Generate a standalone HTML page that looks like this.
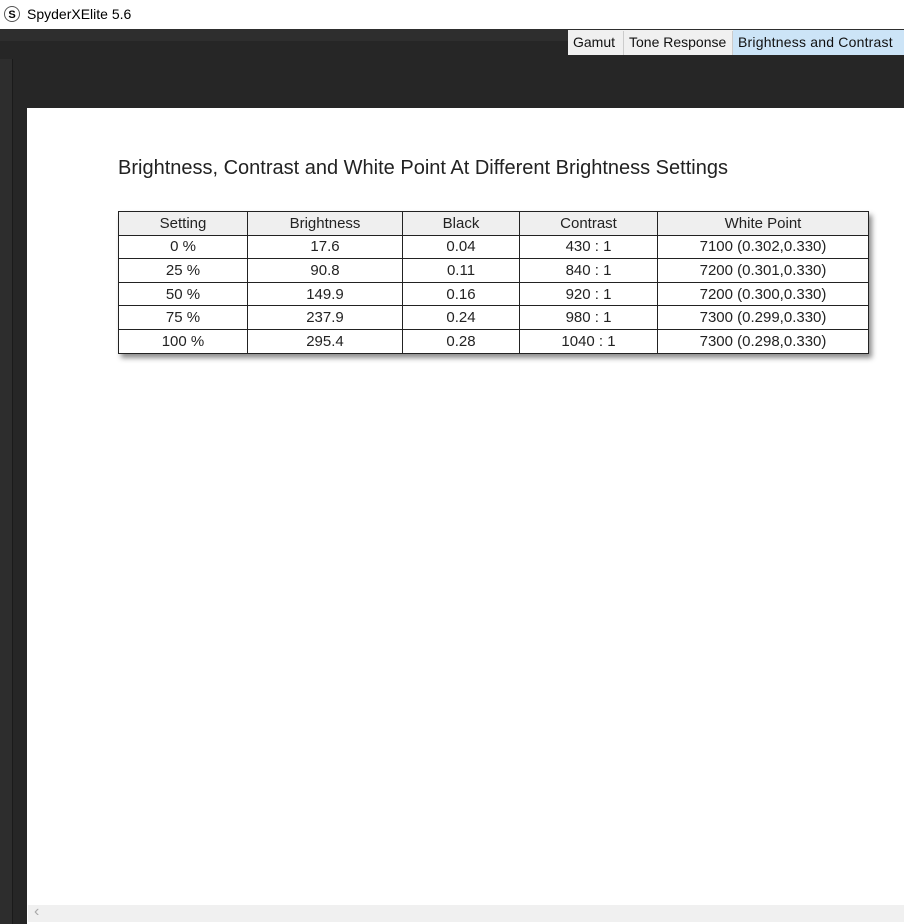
<!DOCTYPE html>
<html><head><style>
body{margin:0;width:904px;height:924px;overflow:hidden;background:#fff;font-family:"Liberation Sans",sans-serif;position:relative}
.a{position:absolute}
table{border-collapse:collapse;position:absolute;left:118px;top:211px;box-shadow:3px 4px 5px rgba(0,0,0,.45)}
td{border:1.5px solid #222;height:22.6px;padding:0;text-align:center;font-size:15px;color:#222}
tr:first-child td{background:#efefef}
</style></head><body>
<div class="a" style="left:4px;top:6px;width:16px;height:16px;border:1px solid #555;border-radius:50%;font:bold 11px 'Liberation Sans';text-align:center;line-height:16px;box-sizing:border-box">S</div>
<div class="a" style="left:27px;top:6px;font-size:14px;color:#000">SpyderXElite 5.6</div>
<div class="a" style="left:0;top:29px;width:904px;height:895px;background:#262626"></div>
<div class="a" style="left:0;top:29px;width:904px;height:12px;background:#2e2e2e"></div>
<div class="a" style="left:0;top:59px;width:12px;height:865px;background:#2d2d2d;border-right:1px solid #1a1a1a"></div>
<div class="a" style="left:568px;top:30px;width:336px;height:25px;background:#f0f0f0"></div>
<div class="a" style="left:733px;top:30px;width:171px;height:25px;background:#cce4f7"></div>
<div class="a" style="left:623px;top:31px;width:1px;height:24px;background:#ccc"></div>
<div class="a" style="left:732px;top:31px;width:1px;height:24px;background:#ccc"></div>
<div class="a" style="left:573px;top:34px;font-size:14px;color:#111">Gamut</div>
<div class="a" style="left:629px;top:34px;font-size:14px;color:#111">Tone Response</div>
<div class="a" style="left:738px;top:34px;font-size:14px;color:#111;letter-spacing:.2px">Brightness and Contrast</div>
<div class="a" style="left:27px;top:108px;width:877px;height:816px;background:#fff"></div>
<div class="a" style="left:28px;top:905px;width:876px;height:17px;background:#f0f0f0"></div>
<div class="a" style="left:34px;top:903px;color:#aaa;font-size:16px">&lsaquo;</div>
<div class="a" style="left:118px;top:157px;font-size:20px;color:#222">Brightness, Contrast and White Point At Different Brightness Settings</div>
<table>
<tr><td style="width:128px">Setting</td><td style="width:154px">Brightness</td><td style="width:116px">Black</td><td style="width:137px">Contrast</td><td style="width:210px">White Point</td></tr>
<tr><td>0 %</td><td>17.6</td><td>0.04</td><td>430 : 1</td><td>7100 (0.302,0.330)</td></tr>
<tr><td>25 %</td><td>90.8</td><td>0.11</td><td>840 : 1</td><td>7200 (0.301,0.330)</td></tr>
<tr><td>50 %</td><td>149.9</td><td>0.16</td><td>920 : 1</td><td>7200 (0.300,0.330)</td></tr>
<tr><td>75 %</td><td>237.9</td><td>0.24</td><td>980 : 1</td><td>7300 (0.299,0.330)</td></tr>
<tr><td>100 %</td><td>295.4</td><td>0.28</td><td>1040 : 1</td><td>7300 (0.298,0.330)</td></tr>
</table>
</body></html>
